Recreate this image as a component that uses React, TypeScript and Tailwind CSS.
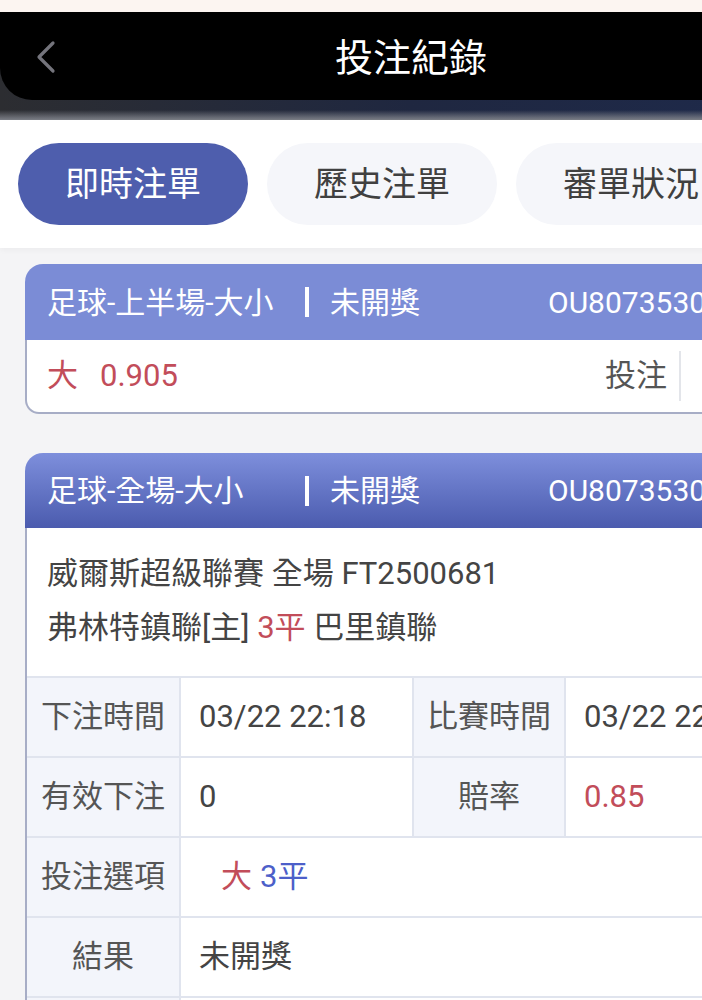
import React from 'react';

export default function App() {
  const rows = [
    { label: '下注時間', value: '03/22 22:18', label2: '比賽時間', value2: '03/22 22:30' },
    { label: '有效下注', value: '0', label2: '賠率', value2: '0.85', red: true },
  ];

  return (
    <div className="w-[702px] h-[1000px] overflow-hidden bg-[#f4f4f6] font-[family-name:Roboto,'Noto_Sans_CJK_TC',sans-serif]">
      <div className="w-[822px]">
        {/* status strip + header */}
        <div className="h-[12px] bg-[#fcf5f1]" />
        <div className="bg-gradient-to-r from-[#2c2d31] via-[#1f2740] to-[#1e2a4c]">
          <div className="relative h-[88px] bg-black rounded-bl-[32px] flex items-center justify-center">
            <svg className="absolute left-[32px] top-[28px]" width="28" height="34" viewBox="0 0 28 34" fill="none">
              <path d="M21 3 L7 17 L21 31" stroke="#74747c" strokeWidth="3.2" strokeLinecap="round" strokeLinejoin="round" />
            </svg>
            <span className="text-white text-[38px] leading-none mt-[3px]">投注紀錄</span>
          </div>
          <div className="h-[20px] bg-gradient-to-b from-transparent via-transparent to-[#7d8088]" />
        </div>

        {/* tabs */}
        <div className="bg-white px-[18px] py-[23px] flex gap-[19px] shadow-[0_2px_6px_rgba(0,0,0,0.04)]">
          <div className="w-[230px] h-[82px] rounded-full bg-[#4e5ead] text-white text-[34px] flex items-center justify-center">即時注單</div>
          <div className="w-[230px] h-[82px] rounded-full bg-[#f5f6fa] text-[#404040] text-[34px] flex items-center justify-center">歷史注單</div>
          <div className="w-[230px] h-[82px] rounded-full bg-[#f5f6fa] text-[#404040] text-[34px] flex items-center justify-center">審單狀況</div>
        </div>

        <div className="px-[25px] pt-[16px]">
          {/* card 1 */}
          <div>
            <div className="h-[76px] rounded-t-[18px] bg-[#7b8cd6] text-white text-[30px] flex items-center pl-[22px]">
              <span className="w-[258px]">足球-上半場-大小</span>
              <span className="w-[4px] h-[30px] bg-white mr-[21px]" />
              <span className="w-[218px]">未開獎</span>
              <span>OU807353001</span>
            </div>
            <div className="h-[74px] bg-white border-x-2 border-b-2 border-[#a7adc6] rounded-b-[14px] flex items-center pl-[20px] text-[31px]">
              <span className="text-[#c24d5a]">大</span>
              <span className="text-[#c24d5a] ml-[22px]">0.905</span>
              <span className="ml-auto text-[#555]">投注</span>
              <span className="w-[2px] h-[50px] bg-[#e3e5ea] ml-[12px]" />
              <span className="w-[114px]" />
            </div>
          </div>

          {/* card 2 */}
          <div className="mt-[39px]">
            <div className="h-[75px] rounded-t-[18px] bg-gradient-to-b from-[#7e8fdc] to-[#4b5bae] text-white text-[30px] flex items-center pl-[22px]">
              <span className="w-[258px]">足球-全場-大小</span>
              <span className="w-[4px] h-[30px] bg-white mr-[21px]" />
              <span className="w-[218px]">未開獎</span>
              <span>OU807353002</span>
            </div>
            <div className="bg-white border-x-2 border-[#a7adc6]">
              <div className="px-[20px] pt-[19px] pb-[21px] text-[31px] leading-[54px] text-[#444]">
                <div>威爾斯超級聯賽 全場 FT2500681</div>
                <div>
                  弗林特鎮聯[主] <span className="text-[#c24d5a]">3平</span> 巴里鎮聯
                </div>
              </div>
              <div className="grid grid-cols-[152px_233px_152px_1fr] text-[31px] text-[#444]">
                {rows.map((r) => (
                  <React.Fragment key={r.label}>
                    <div className="h-[80px] border-t-2 border-[#e0e4ee] bg-[#f3f5fb] flex items-center justify-center text-[#555]">{r.label}</div>
                    <div className="h-[80px] border-t-2 border-l-2 border-[#e0e4ee] flex items-center pl-[18px]">{r.value}</div>
                    <div className="h-[80px] border-t-2 border-l-2 border-[#e0e4ee] bg-[#f3f5fb] flex items-center justify-center text-[#555]">{r.label2}</div>
                    <div className={`h-[80px] border-t-2 border-l-2 border-[#e0e4ee] flex items-center pl-[18px] ${r.red ? 'text-[#c24d5a]' : ''}`}>{r.value2}</div>
                  </React.Fragment>
                ))}
                <div className="h-[80px] border-t-2 border-[#e0e4ee] bg-[#f3f5fb] flex items-center justify-center text-[#555]">投注選項</div>
                <div className="col-span-3 h-[80px] border-t-2 border-l-2 border-[#e0e4ee] flex items-center pl-[40px]">
                  <span className="text-[#c24d5a]">大</span>
                  <span className="text-[#4d5fc9] ml-[8px]">3平</span>
                </div>
                <div className="h-[80px] border-t-2 border-[#e0e4ee] bg-[#f3f5fb] flex items-center justify-center text-[#555]">結果</div>
                <div className="col-span-3 h-[80px] border-t-2 border-l-2 border-[#e0e4ee] flex items-center pl-[18px]">未開獎</div>
                <div className="h-[80px] border-t-2 border-[#e0e4ee] bg-[#f3f5fb] flex items-center justify-center text-[#555]">派彩</div>
                <div className="col-span-3 h-[80px] border-t-2 border-l-2 border-[#e0e4ee] flex items-center pl-[18px]">0</div>
              </div>
            </div>
          </div>
        </div>
      </div>
    </div>
  );
}
